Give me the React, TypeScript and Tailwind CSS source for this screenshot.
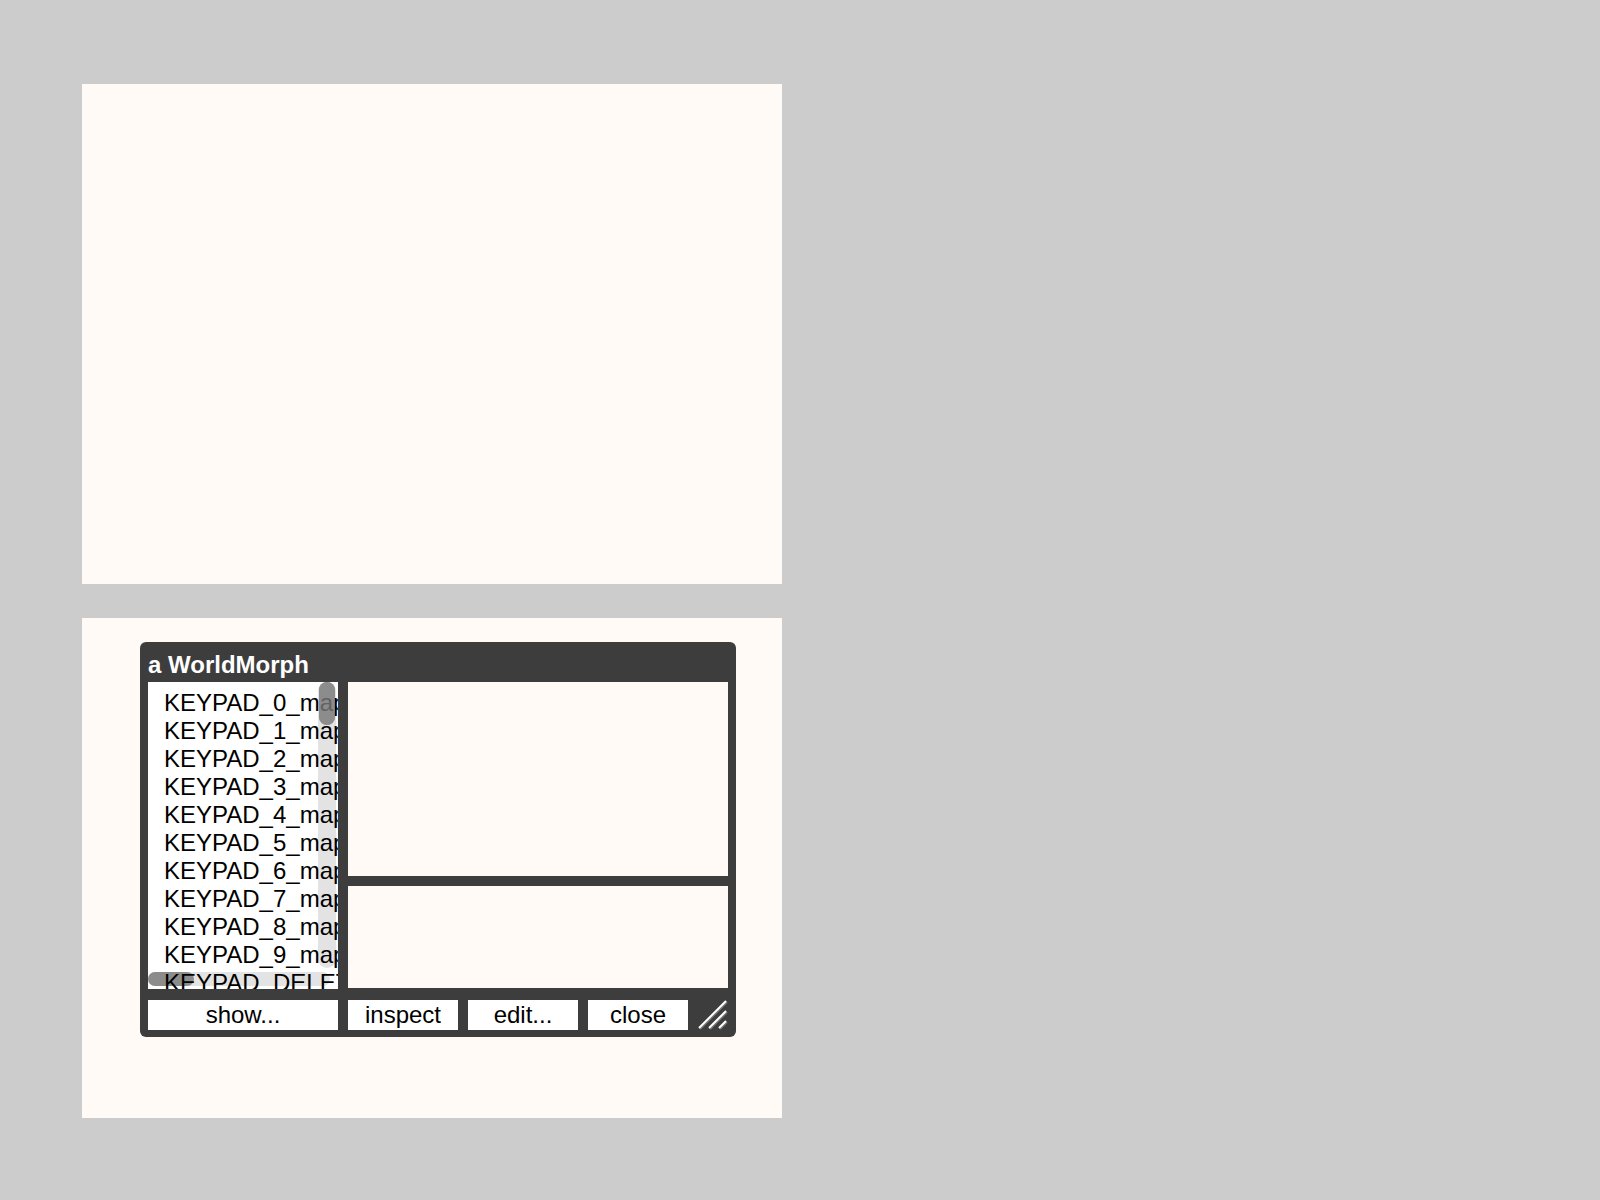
import React from "react";

const items = [
  "KEYPAD_0_map",
  "KEYPAD_1_map",
  "KEYPAD_2_map",
  "KEYPAD_3_map",
  "KEYPAD_4_map",
  "KEYPAD_5_map",
  "KEYPAD_6_map",
  "KEYPAD_7_map",
  "KEYPAD_8_map",
  "KEYPAD_9_map",
  "KEYPAD_DELETE_map",
];

const font = "font-['Liberation_Sans',Arial,sans-serif]";

function Button({ label, className }: { label: string; className: string }) {
  return (
    <div
      className={`${className} h-[30px] bg-white flex items-center justify-center text-[24px] leading-none text-black`}
    >
      {label}
    </div>
  );
}

function ResizeHandle() {
  return (
    <svg width="30" height="30" viewBox="0 0 30 30">
      <g strokeWidth="2">
        <line x1="2" y1="29" x2="29" y2="2" stroke="#777" />
        <line x1="1" y1="28" x2="28" y2="1" stroke="#fff" />
        <line x1="12" y1="29" x2="29" y2="12" stroke="#777" />
        <line x1="11" y1="28" x2="28" y2="11" stroke="#fff" />
        <line x1="22" y1="29" x2="29" y2="22" stroke="#777" />
        <line x1="21" y1="28" x2="28" y2="21" stroke="#fff" />
      </g>
    </svg>
  );
}

function Inspector() {
  return (
    <div className="w-[596px] h-[395px] bg-[#3d3d3d] rounded-[6px] px-2 flex flex-col">
      <div className="h-10 flex items-center pt-[5px] text-white font-bold text-[24px]">
        a WorldMorph
      </div>
      <div className="flex gap-[10px] h-[307px]">
        <div className="relative w-[190px] h-[307px] bg-white overflow-hidden">
          {/* scroll bars */}
          <div className="absolute left-[170px] top-0 w-[18px] h-[286px] rounded-full bg-[#e3e3e3]" />
          <div className="absolute left-[171px] top-0 w-4 h-[43px] rounded-full bg-[#8c8c8c]" />
          <div className="absolute left-0 top-[290px] w-[182px] h-[14px] rounded-full bg-[#e3e3e3]" />
          <div className="absolute left-0 top-[290px] w-[46px] h-[14px] rounded-full bg-[#8c8c8c]" />
          <div className="relative pt-[7px] pl-[16px] whitespace-nowrap text-[24px] leading-[28px] text-black">
            {items.map((it) => (
              <div key={it}>{it}</div>
            ))}
          </div>
          <div className="absolute left-[171px] top-0 w-4 h-[43px] rounded-full bg-[#8c8c8c]/70" />
        </div>
        <div className="w-[380px] flex flex-col gap-[10px]">
          <div className="h-[194px] bg-[#fffaf5]" />
          <div className="h-[102px] bg-[#fffaf5]" />
        </div>
      </div>
      <div className="flex gap-[10px] mt-[11px]">
        <Button label="show..." className="w-[190px]" />
        <Button label="inspect" className="w-[110px]" />
        <Button label="edit..." className="w-[110px]" />
        <Button label="close" className="w-[100px]" />
        <ResizeHandle />
      </div>
    </div>
  );
}

export default function App() {
  return (
    <div className={`${font} min-h-[1200px] w-[1600px] bg-[#cccccc] pt-[84px] pl-[82px]`}>
      <div className="flex flex-col gap-[34px]">
        <div className="w-[700px] h-[500px] bg-[#fffaf5]" />
        <div className="w-[700px] h-[500px] bg-[#fffaf5] pt-[24px] pl-[58px]">
          <Inspector />
        </div>
      </div>
    </div>
  );
}
